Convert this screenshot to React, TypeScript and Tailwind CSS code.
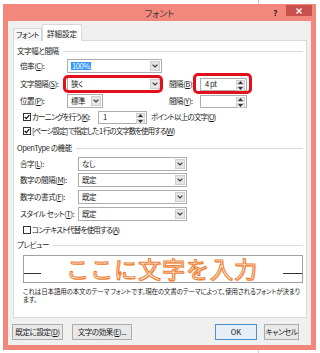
import React from "react";

const Chevron = () => (
  <svg width="6" height="4" viewBox="0 0 6 4">
    <path d="M0.6 0.6 L3 3 L5.4 0.6" fill="none" stroke="#3a3a3a" strokeWidth="1.2" />
  </svg>
);

function Combo({ className, children }: { className: string; children?: React.ReactNode }) {
  return (
    <div className={`flex h-[14px] border border-[#acacac] bg-white ${className}`}>
      <div className="flex-1 flex items-center pl-[3px] min-w-0 overflow-hidden whitespace-nowrap">{children}</div>
      <div className="w-[10px] my-px mr-px flex items-center justify-center bg-[#e6e6e6] border border-[#cfcfcf]">
        <Chevron />
      </div>
    </div>
  );
}

function Spin({ className, value }: { className: string; value?: string }) {
  return (
    <div className={`flex h-[13px] border border-[#acacac] bg-white ${className}`}>
      <div className="flex-1 flex items-center pl-[4px] whitespace-nowrap">{value}</div>
      <div className="w-[9px] my-px mr-px flex flex-col gap-px">
        <div className="flex-1 flex items-center justify-center bg-[#e6e6e6] border border-[#cfcfcf]">
          <svg width="5" height="3" viewBox="0 0 5 3"><path d="M0 3 L2.5 0 L5 3 Z" fill="#333" /></svg>
        </div>
        <div className="flex-1 flex items-center justify-center bg-[#e6e6e6] border border-[#cfcfcf]">
          <svg width="5" height="3" viewBox="0 0 5 3"><path d="M0 0 L2.5 3 L5 0 Z" fill="#333" /></svg>
        </div>
      </div>
    </div>
  );
}

function Check({ checked }: { checked?: boolean }) {
  return (
    <div className="w-[8px] h-[8px] border border-[#333] bg-white flex items-center justify-center shrink-0">
      {checked && (
        <svg width="6" height="6" viewBox="0 0 6 6">
          <path d="M0.7 3 L2.3 4.6 L5.3 1.1" fill="none" stroke="#111" strokeWidth="1.3" />
        </svg>
      )}
    </div>
  );
}

function Header({ children, className }: { children: React.ReactNode; className: string }) {
  return (
    <div className={`flex items-center h-[10px] pl-[3px] pr-[3px] ${className}`}>
      <span className="whitespace-nowrap">{children}</span>
      <div className="flex-1 h-px bg-[#dcdcdc] ml-[4px]" />
    </div>
  );
}

function Btn({ className, children }: { className: string; children: React.ReactNode }) {
  return (
    <div className={`h-[16px] flex items-center justify-center border whitespace-nowrap ${className}`}>{children}</div>
  );
}

export default function App() {
  return (
    <div className="w-[320px] h-[353px] overflow-hidden bg-white bg-[linear-gradient(to_right,transparent_258px,#cfcfcf_258px,#cfcfcf_259px,transparent_259px)] pt-[4px] pl-[3px] text-[7.5px] tracking-[-0.4px] leading-none text-[#1a1a1a] font-['Meiryo_UI','Noto_Sans_CJK_JP',sans-serif] [font-feature-settings:'palt']">
      <div className="w-[313px] h-[346px] bg-[#f3877c] flex flex-col px-[5px] pb-[5px]">
        {/* title bar */}
        <div className="h-[17px] flex items-center relative">
          <div className="flex-1 text-center text-[9px] tracking-normal text-[#3a3a3a] pt-[2px]">フォント</div>
          <div className="absolute right-[34px] top-[5px] text-[8px] font-bold text-[#222]">?</div>
          <div className="absolute right-[-1px] top-[1px] w-[26px] h-[11px] bg-[#c9504c] flex items-center justify-center">
            <svg width="6" height="6" viewBox="0 0 6 6">
              <path d="M0.5 0.5 L5.5 5.5 M5.5 0.5 L0.5 5.5" stroke="#fff" strokeWidth="1.4" />
            </svg>
          </div>
        </div>
        {/* client area */}
        <div className="flex-1 bg-[#f0f0f0] flex flex-col pl-[5px] pr-[4px] pt-[3px]">
          {/* tabs */}
          <div className="flex items-end h-[17px] relative z-10 -mb-px">
            <div className="w-[29px] h-[13px] bg-[#f6f6f6] border border-b-0 border-[#d9d9d9] flex items-center justify-center">
              フォント
            </div>
            <div className="w-[40px] h-[17px] bg-white border border-b-0 border-[#d9d9d9] flex items-center justify-center pt-[1px] tracking-normal">
              詳細設定
            </div>
          </div>
          {/* panel */}
          <div className="h-[278px] bg-white border border-[#d9d9d9] flex flex-col">
            <Header className="mt-[5px]">文字幅と間隔</Header>

            <div className="flex items-center h-[14px] mt-[3px] pl-[6px]">
              <div className="w-[47px] whitespace-nowrap">倍率(<u>C</u>):</div>
              <Combo className="w-[95px]">
                <span className="bg-[#3399ff] text-white px-px">100%</span>
              </Combo>
            </div>

            <div className="flex items-center h-[14px] mt-[4px] pl-[6px] relative">
              <div className="w-[47px] whitespace-nowrap">文字間隔(<u>S</u>):</div>
              <Combo className="w-[95px]">狭く</Combo>
              <div className="w-[31px] ml-[7px] whitespace-nowrap">間隔(<u>B</u>):</div>
              <Spin className="w-[47px]" value="4 pt" />
              <div className="absolute left-[49px] top-[-2px] w-[100px] h-[18px] border-[3px] border-[#e3101c] rounded-[5px]" />
              <div className="absolute left-[179px] top-[-4px] w-[59px] h-[21px] border-[3px] border-[#e3101c] rounded-[5px]" />
            </div>

            <div className="flex items-center h-[14px] mt-[3px] pl-[6px]">
              <div className="w-[47px] whitespace-nowrap">位置(<u>P</u>):</div>
              <Combo className="w-[36px]">標準</Combo>
              <div className="w-[31px] ml-[66px] whitespace-nowrap">間隔(<u>Y</u>):</div>
              <Spin className="w-[47px]" />
            </div>

            <div className="flex items-center h-[14px] mt-[2px] pl-[9px]">
              <Check checked />
              <div className="w-[66px] ml-px whitespace-nowrap tracking-[-0.8px]">カーニングを行う(<u>K</u>):</div>
              <Spin className="w-[49px]" value="1" />
              <div className="ml-[4px] whitespace-nowrap tracking-[-0.8px]">ポイント以上の文字(<u>O</u>)</div>
            </div>

            <div className="flex items-center h-[12px] mt-px pl-[9px]">
              <Check checked />
              <div className="ml-px whitespace-nowrap tracking-[-1px]">[ページ設定] で指定した 1 行の文字数を使用する(<u>W</u>)</div>
            </div>

            <Header className="mt-[6px]">OpenType の機能</Header>

            <div className="flex items-center h-[14px] mt-[4px] pl-[6px]">
              <div className="w-[58px] whitespace-nowrap">合字(<u>L</u>):</div>
              <Combo className="w-[109px]">なし</Combo>
            </div>
            <div className="flex items-center h-[14px] mt-[2px] pl-[6px]">
              <div className="w-[58px] whitespace-nowrap">数字の間隔(<u>M</u>):</div>
              <Combo className="w-[109px]">既定</Combo>
            </div>
            <div className="flex items-center h-[14px] mt-[3px] pl-[6px]">
              <div className="w-[58px] whitespace-nowrap">数字の書式(<u>F</u>):</div>
              <Combo className="w-[109px]">既定</Combo>
            </div>
            <div className="flex items-center h-[14px] mt-[3px] pl-[6px]">
              <div className="w-[58px] whitespace-nowrap">スタイル セット(<u>T</u>):</div>
              <Combo className="w-[109px]">既定</Combo>
            </div>

            <div className="flex items-center h-[11px] mt-[3px] pl-[9px]">
              <Check />
              <div className="ml-px whitespace-nowrap tracking-[-0.8px]">コンテキスト代替を使用する(<u>A</u>)</div>
            </div>

            <Header className="mt-[5px]">プレビュー</Header>

            <div className="ml-[9px] mr-[3px] mt-[5px] h-[28px] border border-[#a0a0a0] bg-white flex items-center justify-between">
              <div className="w-[17px] h-px bg-[#333] mt-[8px]" />
              <div className="text-[23px] leading-[24px] tracking-[1px] text-white font-['Noto_Sans_CJK_JP',sans-serif] [font-feature-settings:normal] [-webkit-text-stroke:1px_#ee7a2a] [text-shadow:1px_1px_0_#f6b07a] -mt-[3px]">
                ここに文字を入力
              </div>
              <div className="w-[19px] h-px bg-[#333] mt-[8px]" />
            </div>

            <div className="ml-[9px] mt-[4px] text-[6.5px] leading-[8px] tracking-[-0.15px] whitespace-nowrap">
              <div>これは日本語用の本文のテーマ フォントです。現在の文書のテーマによって、使用されるフォントが決まり</div>
              <div>ます。</div>
            </div>
          </div>
          {/* buttons */}
          <div className="flex items-center mt-[6px] -ml-px">
            <Btn className="w-[51px] bg-[#e8e8e8] border-[#acacac]">既定に設定(<u>D</u>)</Btn>
            <Btn className="w-[60px] ml-[9px] bg-[#e8e8e8] border-[#acacac]">文字の効果(<u>E</u>)...</Btn>
            <Btn className="w-[42px] ml-[83px] bg-[#e6eef6] border-[#4d90d0] tracking-normal">OK</Btn>
            <Btn className="w-[35px] ml-[7px] bg-[#e8e8e8] border-[#acacac]">キャンセル</Btn>
          </div>
        </div>
      </div>
    </div>
  );
}
